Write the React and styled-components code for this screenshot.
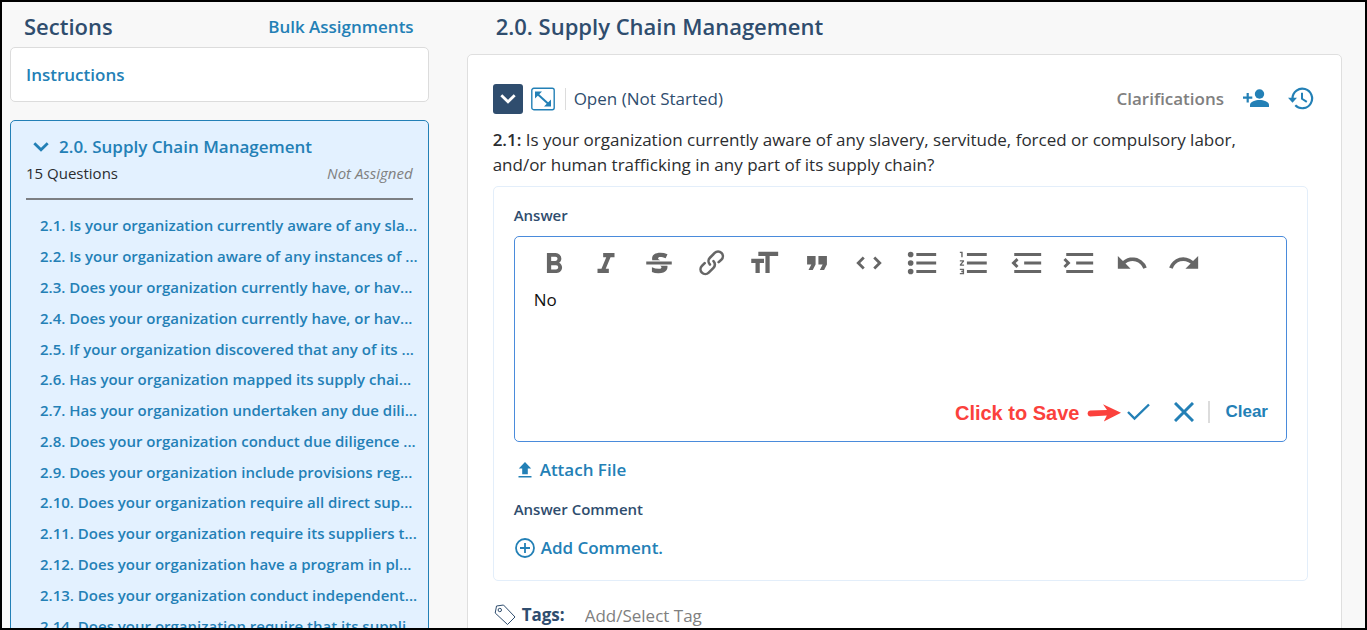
import React from "react";
import styled, { createGlobalStyle } from "styled-components";

const color = {
  navy: "#2f4d6e",
  blue: "#2380b6",
  text: "#2b2d30",
  muted: "#808080",
  icon: "#666666",
  red: "#fb413c",
};

const GlobalStyle = createGlobalStyle`
  *, *::before, *::after { box-sizing: border-box; }
  body {
    margin: 0;
    font-family: "Open Sans", "Noto Sans", sans-serif;
    font-size: 17px;
    color: ${color.text};
  }
  button, input, textarea { font: inherit; color: inherit; }
  button { padding: 0; border: 0; background: none; cursor: pointer; }
  a { color: ${color.blue}; text-decoration: none; }
  h1, h2, h3, p, ul { margin: 0; padding: 0; }
  svg { display: block; flex: none; }
`;

const Page = styled.div`
  display: grid;
  grid-template-columns: minmax(0, 11fr) minmax(0, 23fr);
  column-gap: 38px;
  height: 100vh;
  padding: 0 23px 0 8px;
  overflow: hidden;
  border: 2px solid #000;
  background: #f8f8f8;
`;

const Sidebar = styled.aside`
  min-width: 0;
`;

const SidebarHeader = styled.header`
  display: flex;
  align-items: center;
  justify-content: space-between;
  height: 45px;
  padding: 4px 15px 0 14px;
`;

const Title = styled.h1`
  padding-bottom: 2px;
  font-size: 22px;
  font-weight: 600;
  line-height: 30px;
  color: ${color.navy};
`;

const StrongLink = styled.a`
  font-weight: 600;
  line-height: 24px;
`;

const InstructionsCard = styled.div`
  display: flex;
  align-items: center;
  height: 55px;
  padding: 0 15px;
  border: 1px solid #dcdcdc;
  border-radius: 5px;
  background: #fff;
`;

const SectionCard = styled.section`
  margin-top: 18px;
  padding: 14px 10px 20px 15px;
  border: 1px solid ${color.blue};
  border-radius: 5px;
  background: #e3f1ff;
`;

const SectionToggle = styled.button`
  display: flex;
  align-items: center;
  gap: 10px;
  padding-left: 7px;
  font-weight: 600;
  line-height: 24px;
  color: ${color.blue};
`;

const SectionMeta = styled.div`
  display: flex;
  justify-content: space-between;
  height: 41px;
  margin-right: 5px;
  border-bottom: 2px solid #7c7f83;
  font-size: 15px;
  line-height: 28px;

  em { color: ${color.muted}; }
`;

const QuestionList = styled.ul`
  display: grid;
  grid-auto-rows: 1fr;
  align-items: center;
  min-height: 431px;
  margin-top: 10px;
  padding-left: 14px;
  list-style: none;
`;

const QuestionLink = styled.a`
  display: block;
  font-size: 15px;
  font-weight: 600;
  line-height: 20px;
  white-space: nowrap;
`;

const Main = styled.main`
  min-width: 0;
`;

const MainHeader = styled.header`
  display: flex;
  align-items: center;
  height: 52px;
  padding: 0 29px 3px;
`;

const QuestionCard = styled.section`
  min-height: 640px;
  padding: 29px 25px;
  border: 1px solid #dfdfdf;
  border-radius: 5px;
  background: #fff;
`;

const StatusRow = styled.div`
  display: flex;
  align-items: center;
  height: 30px;
`;

const CollapseButton = styled.button`
  display: grid;
  place-items: center;
  width: 30px;
  height: 30px;
  border-radius: 3px;
  background: ${color.navy};
`;

const ExpandButton = styled.button`
  margin-left: 8px;
`;

const Status = styled.span`
  margin-left: 10px;
  padding-left: 8px;
  border-left: 1px solid #dcdcdc;
  line-height: 22px;
  color: ${color.navy};
`;

const StatusActions = styled.div`
  display: flex;
  align-items: center;
  gap: 19px;
  margin-left: auto;
  padding-right: 2px;
`;

const Clarifications = styled.button`
  font-weight: 600;
  line-height: 22px;
  color: ${color.muted};
`;

const QuestionText = styled.p`
  margin-top: 13px;
  padding-right: 40px;
  line-height: 25px;
  b { font-weight: 600; }
`;

const AnswerPanel = styled.div`
  margin: 9px 8px 0 0;
  padding: 17px 20px 20px;
  border: 1px solid #e3eefa;
  border-radius: 5px;
`;

const FieldLabel = styled.label`
  display: block;
  font-size: 15px;
  font-weight: 600;
  line-height: 22px;
  color: ${color.navy};
`;

const Editor = styled.div`
  margin-top: 10px;
  border: 1px solid #4a8bdb;
  border-radius: 5px;
`;

const Toolbar = styled.div`
  display: grid;
  grid-template-columns: repeat(13, 1fr);
  max-width: 696px;
  height: 44px;
  padding: 9px 0 0 13px;
`;

const ToolButton = styled.button`
  display: grid;
  place-items: center;
  height: 34px;
  color: ${color.icon};
`;

const AnswerInput = styled.textarea`
  display: block;
  width: 100%;
  height: 108px;
  padding: 7px 19px;
  border: 0;
  outline: 0;
  resize: none;
  background: none;
  line-height: 24px;
  color: #111;
`;

const EditorFooter = styled.div`
  display: flex;
  align-items: center;
  justify-content: flex-end;
  height: 52px;
  padding: 0 18px 7px 0;
  font-family: "Liberation Sans", Arial, sans-serif;
`;

const Hint = styled.span`
  display: flex;
  align-items: center;
  gap: 8px;
  padding-top: 2px;
  font-size: 20px;
  font-weight: 700;
  line-height: 24px;
  color: ${color.red};
`;

const IconButton = styled.button`
  margin-left: ${(p) => p.$gap}px;
  color: ${color.blue};
`;

const ClearButton = styled.button`
  margin-left: 14px;
  padding-left: 15px;
  border-left: 2px solid #dcdcdc;
  font-weight: 700;
  line-height: 22px;
  color: ${color.blue};
`;

const ActionButton = styled.button`
  display: flex;
  align-items: center;
  gap: 5px;
  margin: ${(p) => p.$margin};
  font-weight: 600;
  line-height: 24px;
  color: ${color.blue};
`;

const TagRow = styled.div`
  display: flex;
  align-items: center;
  margin-top: 22px;
  padding-left: 1px;
`;

const TagLabel = styled.label`
  display: flex;
  align-items: center;
  gap: 6px;
  font-weight: 700;
  line-height: 24px;
  color: ${color.navy};
`;

const TagInput = styled.input`
  flex: 1;
  margin-left: 20px;
  padding: 0;
  border: 0;
  outline: 0;
  background: none;
  &::placeholder { color: ${color.muted}; opacity: 1; }
`;

const questions = [
  "2.1. Is your organization currently aware of any sla...",
  "2.2. Is your organization aware of any instances of ...",
  "2.3. Does your organization currently have, or hav...",
  "2.4. Does your organization currently have, or hav...",
  "2.5. If your organization discovered that any of its ...",
  "2.6. Has your organization mapped its supply chai...",
  "2.7. Has your organization undertaken any due dili...",
  "2.8. Does your organization conduct due diligence ...",
  "2.9. Does your organization include provisions reg...",
  "2.10. Does your organization require all direct sup...",
  "2.11. Does your organization require its suppliers t...",
  "2.12. Does your organization have a program in pl...",
  "2.13. Does your organization conduct independent...",
  "2.14. Does your organization require that its suppli...",
];

const tools = [
  ["Bold", "M15.6 11.8c1-.7 1.6-1.8 1.6-2.8a4 4 0 0 0-4-4H7v14h7c2.1 0 3.7-1.7 3.7-3.8 0-1.5-.8-2.8-2.1-3.4zM10 7.5h3a1.5 1.5 0 1 1 0 3h-3v-3zm3.5 9H10v-3h3.5a1.5 1.5 0 1 1 0 3z"],
  ["Italic", "M10 5v3h2.2l-3.4 8H6v3h8v-3h-2.2l3.4-8H18V5h-8z"],
  ["Strikethrough", "M12.73 14l.28.14c.26.15.45.3.57.44.12.14.18.3.18.5 0 .3-.15.56-.44.75-.3.2-.76.3-1.39.3A13.52 13.52 0 0 1 7 14.95v3.37a10.64 10.64 0 0 0 4.84.88c1.26 0 2.35-.19 3.28-.56.93-.37 1.64-.9 2.14-1.57s.74-1.45.74-2.32c0-.26-.02-.51-.06-.75h-5.21zm-5.5-4c-.08-.34-.12-.7-.12-1.1 0-1.29.52-2.3 1.58-3.02 1.05-.72 2.5-1.08 4.34-1.08 1.62 0 3.28.34 4.97 1l-1.3 2.93c-1.47-.6-2.73-.9-3.8-.9-.55 0-.96.08-1.2.26-.26.17-.38.38-.38.64 0 .27.16.52.48.74.17.12.53.3 1.05.53H7.23zM3 13h18v-2H3v2z"],
  ["Link", "M9.88 13.7a4.3 4.3 0 0 1 0-6.07l3.37-3.37a4.26 4.26 0 0 1 6.07 0 4.3 4.3 0 0 1 0 6.06l-1.96 1.72a.91.91 0 1 1-1.3-1.3l1.97-1.71a2.46 2.46 0 0 0-3.48-3.48l-3.38 3.37a2.46 2.46 0 0 0 0 3.48.91.91 0 1 1-1.3 1.3zM4.25 19.46a4.3 4.3 0 0 1 0-6.07l1.93-1.9a.91.91 0 1 1 1.3 1.3l-1.93 1.9a2.46 2.46 0 0 0 3.48 3.48l3.37-3.38c.96-.96.96-2.52 0-3.48a.91.91 0 1 1 1.3-1.3 4.3 4.3 0 0 1 0 6.07l-3.38 3.38a4.26 4.26 0 0 1-6.07 0z"],
  ["Heading", "M12 9v3H9v7H6v-7H3V9h9zM8 4h14v3h-6v12h-3V7H8V4z"],
  ["Quote", "M6 17h3l2-4V7H5v6h3zm8 0h3l2-4V7h-6v6h3z"],
  ["Code", "M18.2 12L15 15.2l1.4 1.4L21 12l-4.6-4.6L15 8.8l3.2 3.2zM5.8 12L9 8.8 7.6 7.4 3 12l4.6 4.6L9 15.2 5.8 12z"],
  ["Bullets", "M4 4a2 2 0 1 0 0 4 2 2 0 0 0 0-4zm0 6a2 2 0 1 0 0 4 2 2 0 0 0 0-4zm0 6a2 2 0 1 0 0 4 2 2 0 0 0 0-4zM8 5h14v2H8V5zm0 6h14v2H8v-2zm0 6h14v2H8v-2z"],
  ["Numbers", "M2 17h2v.5H3v1h1v.5H2v1h3v-4H2v1zm1-9h1V4H2v1h1v3zm-1 3h1.8L2 13.1v.9h3v-1H3.2L5 10.9V10H2v1zm5-6v2h14V5H7zm0 14h14v-2H7v2zm0-6h14v-2H7v2z"],
  ["Decrease level", "M3 19h19v-2H3v2zm7-6h12v-2H10v2zm-8.3-.3l2.8 2.9L6 14.2 4 12l2-2-1.4-1.5L1 12l.7.7zM3 5v2h19V5H3z"],
  ["Increase level", "M3 19h19v-2H3v2zm7-6h12v-2H10v2zm-6.9-1L1 14.2l1.4 1.4L6 12l-.7-.7-2.8-2.8L1 9.9 3.1 12zM3 5v2h19V5H3z"],
  ["Undo", "M12.5 8c-2.6 0-5 1-6.9 2.6L2 7v9h9l-3.6-3.6A8 8 0 0 1 20 16l2.4-.8a10.5 10.5 0 0 0-10-7.2z"],
  ["Redo", "M18.4 10.6a10.5 10.5 0 0 0-16.9 4.6L4 16a8 8 0 0 1 12.7-3.6L13 16h9V7l-3.6 3.6z"],
];

const Chevron = ({ stroke }) => (
  <svg width="16" height="10" viewBox="0 0 16 10" fill="none" stroke={stroke} strokeWidth="2.8">
    <path d="M1.3 1.3 8 7.8l6.700-6.500" />
  </svg>
);

const ExpandIcon = () => (
  <svg width="24" height="24" viewBox="0 0 24 24" fill="none" stroke={color.blue}>
    <rect x=".8" y="1.3" width="22.4" height="21.4" rx="2" strokeWidth="1.4" />
    <path d="M6.5 7 18 17.5" strokeWidth="2" />
    <path d="M4 4.5h7L4 11.500zM20 19.500h-7L20 12.500z" fill={color.blue} stroke="none" />
  </svg>
);

const PersonAddIcon = () => (
  <svg width="26" height="20" viewBox="0 0 26 20" fill={color.blue}>
    <circle cx="16.5" cy="5" r="4.700" />
    <path d="M7 18v-2c0-3.300 5.500-5 9.500-5s9.500 1.700 9.500 5v2z" />
    <path d="M3.600 4h2.200v3.600h3.500v2.200H5.800v3.600H3.600v-3.600H0V7.600h3.600z" />
  </svg>
);

const HistoryIcon = () => (
  <svg width="26" height="24" viewBox="0 0 26 24" fill="none" stroke={color.blue} strokeWidth="2.2">
    <path d="M4.500 11.200A9.800 9.800 0 1 1 7.300 18.300" />
    <path d="M0 10.700h9L4.500 15.700z" fill={color.blue} stroke="none" />
    <path d="M14 5.800v6l4.800 3" strokeWidth="2" />
  </svg>
);

const ArrowIcon = () => (
  <svg width="34" height="18" viewBox="0 0 34 18" fill={color.red}>
    <path d="M3 6.5 20 6 16 .3 34 8.800 16.800 17.600l3-6L3 12.400a3 3 0 0 1 0-5.900z" />
  </svg>
);

const CheckIcon = () => (
  <svg width="23" height="18" viewBox="0 0 23 18" fill="none" stroke="currentColor" strokeWidth="2.4">
    <path d="m1 9 6.5 6.5L22 1.5" />
  </svg>
);

const CloseIcon = () => (
  <svg width="20" height="20" viewBox="0 0 20 20" fill="none" stroke="currentColor" strokeWidth="3">
    <path d="m1 1 18 18M19 1 1 19" />
  </svg>
);

const UploadIcon = () => (
  <svg width="21" height="20" viewBox="0 0 21 20" fill={color.blue}>
    <path d="M11 2 17.2 8.500h-3.400v5.700H8.200V8.500H4.800zM4.500 16h13v1.600h-13z" />
  </svg>
);

const PlusCircleIcon = () => (
  <svg width="22" height="22" viewBox="0 0 22 22" fill="none" stroke={color.blue} strokeWidth="1.8">
    <circle cx="11" cy="11" r="9" />
    <path d="M11 6v10M6 11h10" />
  </svg>
);

const TagIcon = () => (
  <svg width="22" height="22" viewBox="0 0 22 22" fill="none" stroke={color.navy} strokeWidth="1" strokeLinejoin="round">
    <path d="M2.5 2 9.500 1 21 13l-7.500 7.500L1.200 9z" />
    <circle cx="5.8" cy="6" r="1.700" />
  </svg>
);

export default function App() {
  return (
    <>
      <GlobalStyle />
      <Page>
        <Sidebar>
          <SidebarHeader>
            <Title as="h2">Sections</Title>
            <StrongLink href="#bulk">Bulk Assignments</StrongLink>
          </SidebarHeader>
          <InstructionsCard>
            <StrongLink href="#instructions">Instructions</StrongLink>
          </InstructionsCard>
          <SectionCard>
            <SectionToggle type="button" aria-expanded="true">
              <Chevron stroke={color.blue} />
              2.0. Supply Chain Management
            </SectionToggle>
            <SectionMeta>
              <span>15 Questions</span>
              <em>Not Assigned</em>
            </SectionMeta>
            <QuestionList>
              {questions.map((q) => (
                <li key={q}>
                  <QuestionLink href="#question">{q}</QuestionLink>
                </li>
              ))}
            </QuestionList>
          </SectionCard>
        </Sidebar>

        <Main>
          <MainHeader>
            <Title>2.0. Supply Chain Management</Title>
          </MainHeader>
          <QuestionCard>
            <StatusRow>
              <CollapseButton type="button" aria-label="Collapse question">
                <Chevron stroke="#fff" />
              </CollapseButton>
              <ExpandButton type="button" aria-label="Expand question">
                <ExpandIcon />
              </ExpandButton>
              <Status>Open (Not Started)</Status>
              <StatusActions>
                <Clarifications type="button">Clarifications</Clarifications>
                <button type="button" aria-label="Assign person"><PersonAddIcon /></button>
                <button type="button" aria-label="History"><HistoryIcon /></button>
              </StatusActions>
            </StatusRow>
            <QuestionText>
              <b>2.1:</b> Is your organization currently aware of any slavery, servitude, forced or
              compulsory labor, and/or human trafficking in any part of its supply chain?
            </QuestionText>

            <AnswerPanel>
              <FieldLabel htmlFor="answer">Answer</FieldLabel>
              <Editor>
                <Toolbar role="toolbar" aria-label="Formatting">
                  {tools.map(([name, d]) => (
                    <ToolButton key={name} type="button" aria-label={name}>
                      <svg width="34" height="34" viewBox="0 0 24 24" fill="currentColor">
                        <path d={d} />
                      </svg>
                    </ToolButton>
                  ))}
                </Toolbar>
                <AnswerInput id="answer" defaultValue="No" spellCheck={false} />
                <EditorFooter>
                  <Hint>
                    Click to Save
                    <ArrowIcon />
                  </Hint>
                  <IconButton type="button" aria-label="Save" $gap={6}><CheckIcon /></IconButton>
                  <IconButton type="button" aria-label="Cancel" $gap={24}><CloseIcon /></IconButton>
                  <ClearButton type="button">Clear</ClearButton>
                </EditorFooter>
              </Editor>
              <ActionButton type="button" $margin="16px 0">
                <UploadIcon />
                Attach File
              </ActionButton>
              <FieldLabel as="h3">Answer Comment</FieldLabel>
              <ActionButton type="button" $margin="16px 0 0">
                <PlusCircleIcon />
                Add Comment.
              </ActionButton>
            </AnswerPanel>

            <TagRow>
              <TagLabel htmlFor="tags">
                <TagIcon />
                Tags:
              </TagLabel>
              <TagInput id="tags" placeholder="Add/Select Tag" />
            </TagRow>
          </QuestionCard>
        </Main>
      </Page>
    </>
  );
}
